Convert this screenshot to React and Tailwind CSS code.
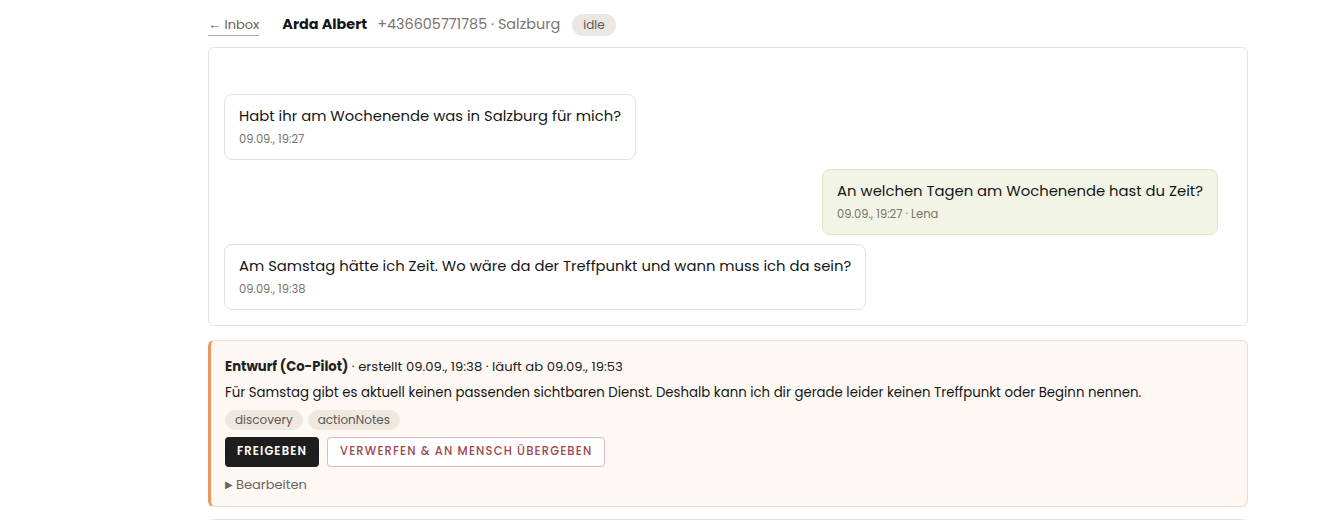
import { useState } from 'react'

const messages = [
  { id: 1, from: 'user', text: 'Habt ihr am Wochenende was in Salzburg für mich?', meta: '09.09., 19:27' },
  { id: 2, from: 'agent', text: 'An welchen Tagen am Wochenende hast du Zeit?', meta: '09.09., 19:27 · Lena' },
  { id: 3, from: 'user', text: 'Am Samstag hätte ich Zeit. Wo wäre da der Treffpunkt und wann muss ich da sein?', meta: '09.09., 19:38' },
]

function Bubble({ msg }) {
  const mine = msg.from === 'agent'
  return (
    <div className={mine ? 'flex justify-end pr-[14px]' : 'flex justify-start'}>
      <div
        className={
          mine
            ? 'rounded-lg border border-[#dfe3cc] bg-[#f2f4e6] px-[14px] pt-[10px] pb-[12px]'
            : 'rounded-lg border border-[#e1e1e1] bg-white px-[14px] pt-[10px] pb-[12px]'
        }
      >
        <p className="text-[14.8px] leading-[22px] text-[#161616]">{msg.text}</p>
        <p className="mt-[4px] text-[11.5px] leading-[16px] text-[#7a7570]">{msg.meta}</p>
      </div>
    </div>
  )
}

export default function App() {
  const [editing, setEditing] = useState(false)

  return (
    <div className="min-h-[520px] bg-white pl-[208px] pt-[14px] font-['Poppins','Open_Sans',sans-serif]">
      <div className="w-[1040px]">
        <header className="flex h-[22px] items-center">
          <a className="border-b border-[#b9a58f] text-[13px] leading-[20px] text-[#6b5e52]" href="#">
            ← Inbox
          </a>
          <h1 className="ml-[23px] text-[14.4px] font-bold text-[#161616]">Arda Albert</h1>
          <span className="ml-[10px] text-[14.4px] text-[#7a746e]">+436605771785 · Salzburg</span>
          <span className="ml-[12px] rounded-full bg-[#ebe8e4] px-[11px] py-[2px] text-[12px] text-[#5d5750]">idle</span>
        </header>

        <section className="mt-[11px] flex flex-col gap-[9px] rounded-md border border-[#e3e3e3] px-[15px] pt-[46px] pb-[15px]">
          {messages.map((m) => (
            <Bubble key={m.id} msg={m} />
          ))}
        </section>

        <section className="mt-[14px] rounded-md border border-[#f0ddc8] border-l-[3px] border-l-[#e9975c] bg-[#fdf8f3] px-[14px] pt-[16px] pb-[11px]">
          <p className="text-[13.2px] leading-[20px] text-[#222]">
            <span className="font-bold">Entwurf (Co-Pilot)</span> · erstellt 09.09., 19:38 · läuft ab 09.09., 19:53
          </p>
          <p className="mt-[6px] text-[13.3px] leading-[20px] text-[#161616]">
            Für Samstag gibt es aktuell keinen passenden sichtbaren Dienst. Deshalb kann ich dir gerade leider keinen Treffpunkt oder Beginn nennen.
          </p>
          <div className="mt-[7px] flex gap-[5px]">
            <span className="rounded-full bg-[#eee8e1] px-[10px] py-[1px] text-[12px] leading-[18px] text-[#5e5852]">discovery</span>
            <span className="rounded-full bg-[#eee8e1] px-[10px] py-[1px] text-[12px] leading-[18px] text-[#5e5852]">actionNotes</span>
          </div>
          <div className="mt-[7px] flex gap-[8px]">
            <button
              className="h-[30px] rounded-[4px] bg-[#1e1e1e] px-[12px] text-[11.5px] font-semibold tracking-[0.1em] text-white"
              type="button"
            >
              FREIGEBEN
            </button>
            <button
              className="h-[30px] rounded-[4px] border border-[#e2b7bb] bg-white px-[12px] text-[11.5px] font-medium tracking-[0.1em] text-[#a0474f]"
              type="button"
            >
              VERWERFEN &amp; AN MENSCH ÜBERGEBEN
            </button>
          </div>
          <button
            className="mt-[8px] flex items-center gap-[3px] text-[13px] leading-[20px] text-[#6a645e]"
            onClick={() => setEditing(!editing)}
            type="button"
          >
            <span className="text-[10px]">{editing ? '▼' : '▶'}</span>
            Bearbeiten
          </button>
        </section>

        <div className="mt-[12px] h-[20px] rounded-t-md border border-b-0 border-[#e3e3e3]" />
      </div>
    </div>
  )
}
